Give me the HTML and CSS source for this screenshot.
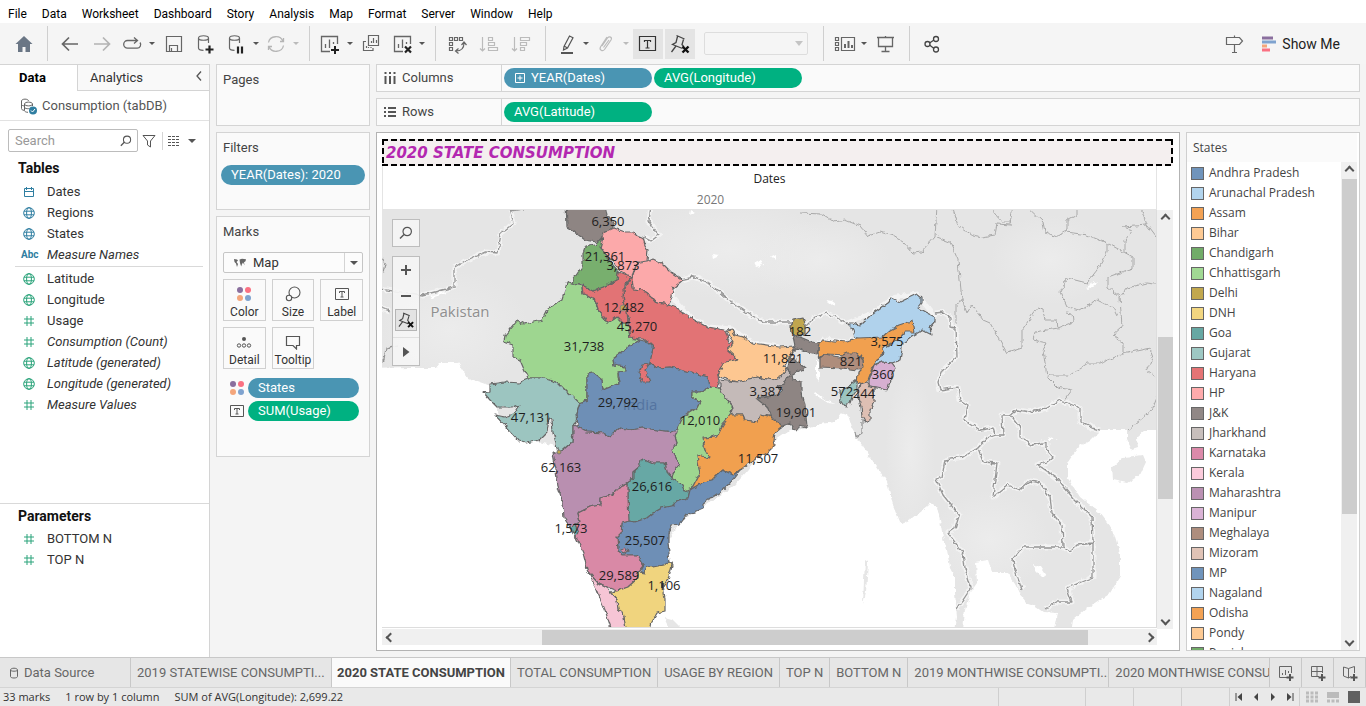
FILE: index.html
```html
<!DOCTYPE html>
<html lang="en">
<head>
<meta charset="utf-8">
<meta name="viewport" content="width=device-width, initial-scale=1">
<title>Consumption - 2020 STATE CONSUMPTION</title>
<link rel="stylesheet" href="styles.css">
</head>
<body>
<svg class="defs" aria-hidden="true">
  <defs>
    <symbol id="i-globe" viewBox="0 0 12 12"><g fill="none" stroke="currentColor"><circle cx="6" cy="6" r="5.3"/><ellipse cx="6" cy="6" rx="2.4" ry="5.3"/><path d="M1 4.2h10M1 7.8h10"/></g></symbol>
    <symbol id="i-hash" viewBox="0 0 12 12"><path d="M4 1v10M8 1v10M1 4h10M1 8h10" fill="none" stroke="currentColor"/></symbol>
    <symbol id="i-cal" viewBox="0 0 12 12"><path d="M1.5 2.5h9v8h-9zM1.5 5.5h9M3.5 1v3M8.500 1v3" fill="none" stroke="currentColor"/></symbol>
    <symbol id="i-dots" viewBox="0 0 16 16"><circle cx="4" cy="4" r="3" fill="#8a6f9e"/><circle cx="12" cy="4" r="3" fill="#fa7182"/><circle cx="4" cy="12" r="3" fill="#f4a67c"/><circle cx="12" cy="12" r="3" fill="#7fa3cf"/></symbol>
    <symbol id="i-text" viewBox="0 0 14 14"><path d="M.5 1.500h13v11H.5zM4.500 6V4.500h5V6M7 4.500v5.500M5.500 10h3" fill="none" stroke="#555"/></symbol>
    <symbol id="i-mag" viewBox="0 0 14 14"><circle cx="8.200" cy="5.500" r="4.200" fill="none" stroke="currentColor" stroke-width="1.200"/><path d="M5 8.500L1 12.500" stroke="currentColor" stroke-width="1.500"/></symbol>
    <symbol id="i-pin" viewBox="0 0 24 24"><path d="M8.500 3.500l8 3.500M9.500 4.500L8 10.500l-3.500 2 10 4M15.500 7.500l-1.500 5 2 2.500M8 14L3.500 20" fill="none" stroke="#444" stroke-width="1.300"/><path d="M14.500 14.500l6 6M20.500 14.500l-6 6" stroke="#111" stroke-width="2.400"/></symbol>
    <symbol id="i-db" viewBox="0 0 24 24"><path d="M4.500 6c0-3 10-3 10 0s-10 3-10 0v10c0 1.500 2 2.300 5 2.300M14.500 6v5" fill="none" stroke="#666" stroke-width="1.200"/></symbol>
    <symbol id="i-chart" viewBox="0 0 24 24"><path d="M13 19.500H4.500v-15h16V12M8.500 16v-4M12.500 16V7.500M16.500 12V10" fill="none" stroke="#666" stroke-width="1.300"/></symbol>
  </defs>
</svg>

<nav class="menubar">
  <button>File</button><button>Data</button><button>Worksheet</button><button>Dashboard</button><button>Story</button><button>Analysis</button><button>Map</button><button>Format</button><button>Server</button><button>Window</button><button>Help</button>
</nav>

<div class="toolbar">
  <div class="group group-home"><button class="tb" aria-label="Start page"><svg viewBox="0 0 24 24"><path d="M12 4l8.500 8H18v8h-4.500v-5h-3v5H6v-8H3.500z" fill="#6a7685"/></svg></button></div>
  <div class="group">
    <button class="tb" aria-label="Undo"><svg viewBox="0 0 24 24"><path d="M21 12H6M12 5.500L5.500 12l6.500 6.500" fill="none" stroke="#666" stroke-width="1.700"/></svg></button>
    <button class="tb" aria-label="Redo"><svg viewBox="0 0 24 24"><path d="M5 12h15M14 5.500l6.500 6.500-6.500 6.500" fill="none" stroke="#b3b3b3" stroke-width="1.700"/></svg></button>
    <button class="tb split" aria-label="Replay"><svg viewBox="0 0 24 24"><path d="M17 8.500H7.500a3.800 3.800 0 0 0 0 7.600h9.500a3.500 3.500 0 0 0 3-5.600M14 5.500l3.500 3-3.500 3" fill="none" stroke="#666" stroke-width="1.300"/></svg></button><button class="caret" aria-label="Replay options"></button>
    <button class="tb" aria-label="Save"><svg viewBox="0 0 24 24"><path d="M5.500 4.500h15v15h-15zM8.500 19v-5.500h8V19M10.500 19v-3" fill="none" stroke="#666" stroke-width="1.200"/></svg></button>
    <button class="tb" aria-label="New data source"><svg viewBox="0 0 24 24"><use href="#i-db" x="1"/><path d="M16.500 13.500v8M12.500 17.500h8" stroke="#222" stroke-width="2.200"/></svg></button>
    <button class="tb split" aria-label="Pause auto updates"><svg viewBox="0 0 24 24"><use href="#i-db" x="1"/><path d="M14 14.500v7M18 14.500v7" stroke="#222" stroke-width="2.200"/></svg></button><button class="caret" aria-label="Auto update options"></button>
    <button class="tb split" aria-label="Run update" disabled><svg viewBox="0 0 24 24"><path d="M4.500 10.500a7.500 7 0 0 1 14.500-1M19.500 13.500a7.500 7 0 0 1-14.500 1M16 9.500h3.500V6M8 14.500H4.500V18" fill="none" stroke="#b5b5b5" stroke-width="1.300"/></svg></button><button class="caret dim" aria-label="Run update options" disabled></button>
  </div>
  <div class="group">
    <button class="tb split" aria-label="New worksheet"><svg viewBox="0 0 24 24"><use href="#i-chart" x="-1"/><path d="M17 14v8M13 18h8" stroke="#222" stroke-width="2"/></svg></button><button class="caret" aria-label="New sheet options"></button>
    <button class="tb" aria-label="Duplicate"><svg viewBox="0 0 24 24"><path d="M9.500 3.500h10v10h-10zM12.500 11V9M14.500 11V6M17.500 11V8M14 16v2.500H4.500v-9H7M7.500 16v-2M9.500 16v-1M12 16v-1" fill="none" stroke="#666" stroke-width="1.200"/></svg></button>
    <button class="tb split" aria-label="Clear sheet"><svg viewBox="0 0 24 24"><use href="#i-chart"/><path d="M15 14.500l6 6M21 14.500l-6 6" stroke="#222" stroke-width="2.200"/></svg></button><button class="caret" aria-label="Clear options"></button>
  </div>
  <div class="group">
    <button class="tb" aria-label="Swap rows and columns"><svg viewBox="0 0 24 24"><path d="M4.500 5.500h3v3h-3zM9.500 5.500h3v3h-3zM14.500 5.500h3v3h-3zM4.500 10.500h3v3h-3zM4.500 15.500h3v3h-3zM19 11c0 5-3 8-8 8M16.500 13l2.500-3 2.500 3M13.500 16.500L10.500 19l3 2.500" fill="none" stroke="#666" stroke-width="1.200"/></svg></button>
    <button class="tb" aria-label="Sort ascending" disabled><svg viewBox="0 0 24 24"><path d="M5.500 5v14M3 16.500l2.500 2.500 2.500-2.500M11.500 5.500h4v3h-4zM11.500 10.500h6v3h-6zM11.500 15.500h9v3h-9z" fill="none" stroke="#bbb" stroke-width="1.200"/></svg></button>
    <button class="tb" aria-label="Sort descending" disabled><svg viewBox="0 0 24 24"><path d="M5.500 5v14M3 16.500l2.500 2.500 2.500-2.500M11.500 5.500h9v3h-9zM11.500 10.500h6v3h-6zM11.500 15.500h4v3h-4z" fill="none" stroke="#bbb" stroke-width="1.200"/></svg></button>
  </div>
  <div class="group">
    <button class="tb split" aria-label="Highlight"><svg viewBox="0 0 24 24"><path d="M10 14.500L15.500 4l3.500 1.800L13.500 16l-4 2zM10 14l3.500 2" fill="none" stroke="#555" stroke-width="1.200"/><path d="M7 21h12" stroke="#555" stroke-width="2"/></svg></button><button class="caret" aria-label="Highlight options"></button>
    <button class="tb split" aria-label="Group members" disabled><svg viewBox="0 0 24 24"><path d="M8 14l5.500-8c2-2.500 5-.5 3.500 2l-6.500 9.500c-2 2.500-5.500.5-4-2.500L13 5M9.500 15.500L15 8" fill="none" stroke="#bbb" stroke-width="1.200"/></svg></button><button class="caret dim" aria-label="Group options" disabled></button>
    <button class="tb on" aria-label="Show mark labels"><svg viewBox="0 0 24 24"><path d="M3.500 4.500h16v14h-16zM8.500 10V8.500h6V10M11.500 8.500v7.500M9.500 16h4" fill="none" stroke="#333" stroke-width="1.200"/></svg></button>
    <button class="tb on" aria-label="Fix axes"><svg viewBox="0 0 24 24"><use href="#i-pin"/></svg></button>
    <label class="fit"><select aria-label="Fit" disabled><option></option></select></label>
  </div>
  <div class="group">
    <button class="tb split" aria-label="Show cards"><svg viewBox="0 0 24 24"><path d="M3.500 5.500h3v3h-3zM3.500 10.500h3v3h-3zM3.500 15.500h3v3h-3zM9.500 5.500h13v13h-13z" fill="none" stroke="#666" stroke-width="1.200"/><path d="M13 16v-4M16.500 16V9M20 16v-3" stroke="#666" stroke-width="2"/></svg></button><button class="caret" aria-label="Card options"></button>
    <button class="tb" aria-label="Presentation mode"><svg viewBox="0 0 24 24"><path d="M4 5.500h17M5.500 5.500v9h14v-9M12.500 14.500v5M8.500 19.500h8M12.500 4v1.500" fill="none" stroke="#666" stroke-width="1.300"/></svg></button>
  </div>
  <div class="group group-last"><button class="tb" aria-label="Share"><svg viewBox="0 0 24 24"><g fill="none" stroke="#444" stroke-width="1.300"><circle cx="7.500" cy="12" r="2.500"/><circle cx="16" cy="7" r="2.500"/><circle cx="16" cy="17.500" r="2.500"/><path d="M9.500 11l4.500-3M9.500 13l4.500 3.500"/></g></svg></button></div>
  <div class="toolbar-end">
    <button class="tb" aria-label="Guide me"><svg viewBox="0 0 24 24"><path d="M4.500 5.500h13l3 3.500-3 3.500h-13zM12.500 3.500v2M12.500 12.500v8M10 20.500h5" fill="none" stroke="#666" stroke-width="1.200"/></svg></button>
    <button class="showme"><svg viewBox="0 0 16 16"><path d="M1 .5h11v3H1z" fill="#8a6f9e"/><path d="M1 4.500h14v3H1z" fill="#7fa3cf"/><path d="M1 8.500h5v3H1z" fill="#f4a67c"/><path d="M1 12.500h8v3H1z" fill="#fa7182"/></svg>Show Me</button>
  </div>
</div>

<main class="workspace">
  <aside class="datapane">
    <div class="pane-tabs">
      <button class="pane-tab active">Data</button>
      <button class="pane-tab">Analytics</button>
      <button class="collapse" aria-label="Collapse"><svg viewBox="0 0 8 12"><path d="M6 1.500L2 6l4 4.500" fill="none" stroke="#555" stroke-width="1.300"/></svg></button>
    </div>
    <div class="source"><svg viewBox="0 0 18 18"><path d="M1.500 4c0-2.500 7-2.500 7 0M1.500 4v7.500c0 1 1 1.800 2.500 1.800M4.500 7c0-2.500 8-2.500 8 0s-8 2.500-8 0v6.500c0 1 1.500 1.800 3.500 1.800M12.500 7v2M1.500 7.500c.5 1 1.500 1.300 2.500 1.300M5 11c1.500.8 3 .8 4.500.5" fill="none" stroke="#666"/><circle cx="13" cy="13.500" r="4" fill="#2f7ea1"/><path d="M11 13.500l1.500 1.500 2.500-3" fill="none" stroke="#fff"/></svg>Consumption (tabDB)</div>
    <div class="searchrow">
      <label class="search"><input type="text" placeholder="Search" aria-label="Search"><svg viewBox="0 0 14 14"><use href="#i-mag"/></svg></label>
      <button aria-label="Filter fields"><svg viewBox="0 0 14 14"><path d="M1 1.500h12L8.500 7v6l-3-2V7z" fill="none" stroke="#555"/></svg></button>
      <button class="view" aria-label="View options"><svg viewBox="0 0 14 12"><path d="M1 1.500h12M1 4.500h12M1 7.500h12M1 10.500h12" stroke="#555" stroke-width="1.200" stroke-dasharray="3 1"/></svg><span class="arrow"></span></button>
    </div>
    <h2>Tables</h2>
    <ul class="fields dims">
      <li><svg><use href="#i-cal"/></svg>Dates</li>
      <li><svg><use href="#i-globe"/></svg>Regions</li>
      <li><svg><use href="#i-globe"/></svg>States</li>
      <li class="gen"><span class="abc">Abc</span>Measure Names</li>
    </ul>
    <ul class="fields measures">
      <li><svg><use href="#i-globe"/></svg>Latitude</li>
      <li><svg><use href="#i-globe"/></svg>Longitude</li>
      <li><svg><use href="#i-hash"/></svg>Usage</li>
      <li class="gen"><svg><use href="#i-hash"/></svg>Consumption (Count)</li>
      <li class="gen"><svg><use href="#i-globe"/></svg>Latitude (generated)</li>
      <li class="gen"><svg><use href="#i-globe"/></svg>Longitude (generated)</li>
      <li class="gen"><svg><use href="#i-hash"/></svg>Measure Values</li>
    </ul>
    <section class="params">
      <h2>Parameters</h2>
      <ul class="fields measures plain">
        <li><svg><use href="#i-hash"/></svg>BOTTOM N</li>
        <li><svg><use href="#i-hash"/></svg>TOP N</li>
      </ul>
    </section>
  </aside>

  <div class="cards">
    <section class="card card-pages"><h3>Pages</h3></section>
    <section class="card card-filters"><h3>Filters</h3><button class="pill dim">YEAR(Dates): 2020</button></section>
    <section class="card card-marks">
      <h3>Marks</h3>
      <label class="marktype"><svg viewBox="0 0 14 10"><path d="M1 1l3 .5 1 1L3.500 4l1.500 2-1 3-1-3.500L1.500 4zM6.500 1.500L9 .8l4 .4-.5 2-1.500 1 .5 3L10 4.500 9 6l-.8 2.500L7 5z" fill="#666"/></svg><select aria-label="Mark type"><option>Map</option></select><span class="drop"><span class="arrow"></span></span></label>
      <div class="markgrid">
        <button><svg viewBox="0 0 16 16"><use href="#i-dots"/></svg>Color</button>
        <button><svg viewBox="0 0 16 16"><g fill="none" stroke="#555" stroke-width="1.100"><circle cx="9.500" cy="6.500" r="5.500"/><circle cx="4" cy="12" r="2.700" fill="#fafafa"/></g></svg>Size</button>
        <button><svg viewBox="0 0 16 16"><use href="#i-text" x="1" y="1" width="14" height="14"/></svg>Label</button>
        <button><svg viewBox="0 0 16 16"><circle cx="8" cy="5" r="2" fill="#555"/><g fill="none" stroke="#555"><circle cx="3" cy="11.500" r="1.700"/><circle cx="8" cy="11.500" r="1.700"/><circle cx="13" cy="11.500" r="1.700"/></g></svg>Detail</button>
        <button><svg viewBox="0 0 16 16"><path d="M1.500 2.500h13v9h-3V15L8 11.500H1.500z" fill="none" stroke="#555" stroke-width="1.200"/></svg>Tooltip</button>
      </div>
      <div class="encodings">
        <div><svg viewBox="0 0 16 16"><use href="#i-dots"/></svg><button class="pill dim">States</button></div>
        <div><svg viewBox="0 0 16 16"><use href="#i-text" x="1" y="1" width="14" height="14"/></svg><button class="pill mea">SUM(Usage)</button></div>
      </div>
    </section>
  </div>

  <div class="canvas">
    <div class="shelf">
      <div class="shelf-name"><svg viewBox="0 0 12 12"><path d="M1.500 4v8M6 4v8M10.500 4v8M1.500 0v2M6 0v2M10.500 0v2" stroke="#555" stroke-width="2"/></svg>Columns</div>
      <button class="pill dim"><svg viewBox="0 0 10 10"><path d="M.5.5h9v9h-9zM5 2.500v5M2.500 5h5" fill="none" stroke="#fff"/></svg>YEAR(Dates)</button>
      <button class="pill mea">AVG(Longitude)</button>
    </div>
    <div class="shelf">
      <div class="shelf-name"><svg viewBox="0 0 12 12"><path d="M4 2h8M4 6h8M4 10h8M0 2h2M0 6h2M0 10h2" stroke="#555" stroke-width="2"/></svg>Rows</div>
      <button class="pill mea">AVG(Latitude)</button>
    </div>
    <div class="sheet-row">
      <section class="sheet">
        <h1 class="sheet-title">2020 STATE CONSUMPTION</h1>
        <div class="viz">
          <div class="viz-head"><div class="field-label">Dates</div><div class="col-header">2020</div></div>
          <div class="map">
            <svg class="mapsvg" viewBox="382 210 774 417" preserveAspectRatio="xMidYMid slice" role="img" aria-label="Map of India by state">
              <defs>
                <filter id="rough" x="-5%" y="-5%" width="110%" height="110%" color-interpolation-filters="sRGB"><feTurbulence type="fractalNoise" baseFrequency="0.18" numOctaves="2" seed="4"/><feDisplacementMap in="SourceGraphic" scale="5" xChannelSelector="R" yChannelSelector="G"/></filter>
                <radialGradient id="relief"><stop offset="0" stop-color="#ececec"/><stop offset="1" stop-color="#ececec" stop-opacity="0"/></radialGradient>
              </defs>
              <rect x="372" y="200" width="800" height="440" fill="#e5e5e5"/>
              <g fill="url(#relief)"><ellipse cx="450" cy="330" rx="80" ry="60"/><ellipse cx="1050" cy="260" rx="60" ry="45"/><ellipse cx="730" cy="250" rx="100" ry="50"/><ellipse cx="910" cy="450" rx="25" ry="80"/><ellipse cx="820" cy="260" rx="70" ry="40"/><ellipse cx="990" cy="540" rx="60" ry="50"/></g>
              <g fill="#fff" filter="url(#rough)">
                <path d="M372 369L410 368 436 368 440 363 458 363 468 378 491 386 500 420 530 440 556 446 570 525 600 590 614 640H372z"/>
                <path d="M645 640L652 622 660 600 662 570 668 540 680 522 703 507 735 485 760 456 775 440 790 430 807 429 820 424 835 422 842 413 848 415 852 428 863 447 877 467 887 482 893 505 901 524 913 518 927 507 930 502 937 507 940 520 943 537 947 550 950 567 955 577 955 593 957 617 954 640z"/>
                <path d="M962 640L965 610 970 593 977 583 976 562 988 560 992 572 1007 572 1015 583 1022 597 1027 603 1033 605 1043 612 1057 613 1052 640z"/>
                <path d="M1170 430L1145 430 1137 437 1138 448 1132 450 1127 440 1127 430 1100 430 1090 440 1078 447 1067 463 1067 477 1080 497 1100 513 1113 530 1120 553 1120 577 1110 593 1087 608 1073 620 1070 640H1170z"/>
                <path d="M430 292l18-4-4 6-13 4zM826 300l6 1 4 3-7 1zM754 263l7-3 2 5-7 2zM771 257l4-2v6zM712 254l7 1-6 3zM690 210l5 3-6 2zM1086 288l9-6 4-1-11 8zM1034 564l6 3 6 9-4 1-6-6zM1048 437l9 3-7 0zM815 392l12 9 9 3-8-1-14-9zM816 360l3 1v20l-3-4z"/>
              </g>
              <g fill="#e6e6e6" filter="url(#rough)"><path d="M1112 467L1123 457 1143 455 1146 462 1140 475 1127 483 1113 480z"/><path d="M664 618l8 2 8 8-2 6-10-8zM865 560l3 2-2 30-3 12 1-24z"/></g>
              <g filter="url(#rough)" fill="none" stroke-linejoin="round">
                <g stroke="#f3f3f3" stroke-width="5"><path d="M509 205L514 223 501 233 498 253 486 252 464 262 454 268 454 287 423 295 372 288M372 305L390 311M651 205L649 222 659 235 651 241 643 237M681 280L694 277 709 283 726 298 746 312 763 322 793 322M805 327L815 317 827 313 845 322M936 313L943 312 950 317 950 327 956 328 957 357 943 370 938 382 940 390 958 387 960 400 968 405 965 420 980 430 993 428 995 435 1003 435 1002 415 1010 415 1017 410 1030 412 1047 408 1060 400 1080 408 1080 422 1093 428 1100 430M1010 415L1020 428 1020 437 1032 445 1047 442 1047 450 1053 457 1047 462 1038 465 1057 478 1073 498 1092 517 1093 543 1093 577 1067 588 1072 602 1057 602 1046 609M995 435L987 438 978 448 983 462 997 463 993 497 1008 485 1020 490 1030 481 1040 483 1050 497 1052 513 1062 525 1063 547 1070 552 1077 545 1093 543M1063 547L1023 547 1013 560 1015 570 1022 590M978 448L963 457 945 460 942 477 936 479 943 495 959 515 955 528 948 533 963 553 965 568 971 588 957 609M673 288L672 297 690 317 708 327 732 329 753 343 780 347M817 345L823 340 847 342 858 338M847 323L873 313 892 298 917 294 935 317M869 387L867 420"/></g>
                <g stroke="#959595" stroke-width="1.300"><path d="M509 205L514 223 501 233 498 253 486 252 464 262 454 268 454 287 423 295 372 288M510 211L529 208M372 305L390 311M382 258L386 264 384 273M372 372L384 360 386 348 398 345M651 205L649 222 659 235 651 241 643 237M681 280L694 277 709 283 726 298 746 312 763 322 793 322M805 327L815 317 827 313 845 322M936 313L943 312 950 317 950 327 956 328 957 357 943 370 938 382 940 390 958 387 960 400 968 405 965 420 980 430 993 428 995 435 1003 435 1002 415 1010 415 1017 410 1030 412 1047 408 1060 400 1080 408 1080 422 1093 428 1100 430M1010 415L1020 428 1020 437 1032 445 1047 442 1047 450 1053 457 1047 462 1038 465 1057 478 1073 498 1092 517 1093 543 1093 577 1067 588 1072 602 1057 602 1046 609M995 435L987 438 978 448 983 462 997 463 993 497 1008 485 1020 490 1030 481 1040 483 1050 497 1052 513 1062 525 1063 547 1070 552 1077 545 1093 543M1063 547L1023 547 1013 560 1015 570 1022 590M978 448L963 457 945 460 942 477 936 479 943 495 959 515 955 528 948 533 963 553 965 568 971 588 957 609M862 420L862 434 856 438 855 432"/></g>
                <path stroke="#a9a9a9" d="M937 205L935 237 922 252 913 253 903 242 893 236 880 232 868 236 860 226 845 220 835 222 822 214 800 213M937 237L950 242 958 260 962 300 967 313 972 305 983 320 990 323 1007 353 1022 348 1022 330 1037 308 1043 310 1045 320 1057 320 1058 328M962 300L956 304 956 325M952 205L958 225 972 235 983 237 995 235 997 224 1010 225 1013 205M990 208L1002 222 1010 222M1025 205L1043 222 1045 232 1057 237 1067 230 1067 220 1077 215 1077 205M1067 232L1087 235 1107 243 1107 253 1097 270 1087 283 1067 278 1060 292 1067 307 1080 310 1097 300 1113 308 1117 316M1107 243L1133 257 1133 268 1108 277 1108 287 1120 297 1122 327 1113 335 1123 343 1123 354 1100 363 1088 363 1070 375 1050 375 1047 377 1043 350 1047 343 1033 340 1035 332 1058 328 1073 322 1072 313 1067 312M1125 253L1125 240 1133 230 1123 227 1147 225 1156 237M1140 205L1147 225M1120 297L1127 288 1147 283 1170 286M1123 354L1150 348 1153 357 1147 370 1160 380M1047 377L1057 387 1072 390 1063 402M1160 390L1152 410 1128 430"/>
              </g>
              <g filter="url(#rough)" stroke="#666" stroke-width="1.200" stroke-linejoin="round">
                <path fill="#8e8583" d="M566 200L567 227 572 230 585 240 598 242 603 236 603 233 614 228 613 223 607 215 604 200z"/>
                <path fill="#fca9aa" d="M603 233L614 228 625 232 633 232 636 235 643 238 645 245 648 250 647 261 640 262 635 267 632 277 627 276 622 272 619 270 612 260 603 250 600 245z"/>
                <path fill="#fca9aa" d="M647 262L653 259 663 264 672 273 683 280 673 288 672 297 668 305 657 303 652 297 642 290 633 289 632 278 636 265 640 263z"/>
                <path fill="#9ed690" d="M572 284L582 286 583 294 587 295 595 300 598 310 604 317 607 323 617 317 623 323 628 323 630 338 640 340 627 348 613 358 614 365 625 367 625 371 618 372 618 377 620 383 603 390 602 380 593 373 587 374 587 400 578 403 567 392 558 383 543 378 528 378 523 367 520 360 513 357 513 345 504 342 505 335 517 320 525 324 542 320 548 308 562 300 567 283z"/>
                <path fill="#e27375" d="M618 272L627 276 632 277 625 285 623 297 624 303 627 310 628 323 623 323 617 317 613 320 607 323 604 317 598 310 595 300 587 295 583 294 582 286 585 287 593 291 603 287 617 280z"/>
                <path fill="#e27375" d="M632 277L633 289 642 290 652 297 657 303 668 305 677 308 690 317 708 327 725 330 729 342 733 343 728 350 738 359 723 363 718 375 719 383 715 390 710 388 708 377 683 370 670 367 657 368 650 363 653 347 643 339 630 338 628 323 629 317 624 303 623 290z"/>
                <path fill="#78af6e" d="M598 242L603 238 600 247 607 255 612 265 618 272 617 280 603 287 593 291 585 287 583 285 572 284 573 280 583 265 583 253 585 247 595 245z"/>
                <path fill="#9cc5c0" d="M528 378L543 378 558 383 567 392 580 403 577 413 578 420 573 425 573 433 572 442 563 450 558 453 556 443 553 432 552 420 549 418 547 433 540 440 526 443 519 441 507 428 495 415 505 417 515 413 520 405 512 408 498 408 490 400 484 393 490 391 490 384 505 382 520 383 523 380z"/>
                <path fill="#6e8fb6" d="M613 358L627 348 640 340 648 342 653 347 650 363 657 368 670 367 683 370 708 377 710 387 700 392 692 392 692 397 700 402 697 408 687 413 682 420 678 427 673 432 657 430 643 428 630 430 620 428 613 433 610 437 603 433 587 432 578 427 577 413 580 403 587 400 587 374 593 373 602 380 603 390 620 383 618 372 625 371 625 367 614 365z"/>
                <path fill="#e27375" d="M642 364L650 363 645 370 650 382 642 382 639 373z"/>
                <path fill="#9ed690" d="M692 392L700 392 710 387 720 388 725 398 733 407 730 415 722 425 718 435 705 438 703 445 705 450 710 458 697 455 698 463 700 473 692 488 685 491 680 483 672 478 675 468 680 465 677 460 672 450 677 443 675 437 677 430 683 417 697 408 700 402 692 397z"/>
                <path fill="#fdc791" d="M727 330L732 329 735 335 743 337 753 343 767 345 780 347 795 346 790 355 783 367 787 368 780 377 772 380 757 377 745 380 737 382 720 377 718 375 723 363 738 359 728 350 733 343z"/>
                <path fill="#c4bab8" d="M720 380L737 382 757 377 772 380 780 377 787 368 790 373 785 383 778 387 782 390 778 395 763 397 758 398 767 407 772 417 760 414 758 422 745 420 743 415 730 415 733 407 725 398 720 388z"/>
                <path fill="#8e8583" d="M793 336L800 337 812 342 819 343 817 354 808 352 797 348 792 352 790 358 795 360 800 363 806 368 797 372 792 375 793 380 802 382 802 393 805 405 807 428 800 426 797 430 793 429 790 423 782 427 772 420 767 407 757 399 778 395 782 390 778 387 785 383 790 373 787 367 790 355 795 346z"/>
                <path fill="#c0a64f" d="M793 320L803 318 805 323 805 334 793 336 791 327z"/>
                <path fill="#b0d2ec" d="M847 323L853 323 860 325 873 313 887 303 892 298 900 302 917 294 922 298 922 303 918 308 925 312 935 317 935 322 930 328 932 335 922 330 913 335 903 343 900 360 892 363 882 362 874 365 877 360 882 357 883 348 858 338 855 337 852 328z"/>
                <path fill="#f1a04f" d="M819 343L823 340 847 342 858 338 882 337 890 330 900 325 912 321 914 332 905 332 900 338 892 343 883 348 882 357 877 360 873 367 868 380 863 384 857 382 858 373 863 368 863 360 858 353 850 355 825 354 820 358 818 352z"/>
                <path fill="#ae8d7c" d="M820 358L825 354 838 357 848 353 857 353 863 360 864 368 857 370 843 368 820 367z"/>
                <path fill="#d6afd1" d="M874 366L882 362 892 363 895 367 892 377 887 390 877 388 869 387 869 380z"/>
                <path fill="#debfb3" d="M860 384L867 382 870 387 874 388 874 402 870 410 870 420 865 422 862 417 861 407 858 393z"/>
                <path fill="#9cc5c0" d="M857 380L857 390 852 397 850 403 845 406 841 400 840 390 848 387z"/>
                <path fill="#f1a04f" d="M730 415L743 415 745 420 758 422 760 414 772 417 782 427 775 433 774 440 775 445 768 452 757 458 740 470 733 475 723 470 717 475 712 480 703 482 690 490 692 488 700 473 698 463 697 455 710 458 705 450 703 438 717 437 722 427z"/>
                <path fill="#b98fb0" d="M578 427L587 432 603 433 610 437 613 433 620 428 630 430 643 428 657 430 673 432 677 432 675 437 677 443 672 450 677 460 680 465 675 468 672 478 667 472 665 463 653 463 642 458 639 467 633 472 633 478 628 482 620 487 612 495 600 498 600 505 590 507 578 513 580 522 575 525 570 527 564 518 563 503 558 487 556 470 553 453 558 453 563 450 572 442 573 433 573 425z"/>
                <path fill="#67a8a5" d="M570 527L575 525 578 532 578 537 575 537 572 532z"/>
                <path fill="#67a8a5" d="M628 482L633 478 633 472 639 467 642 458 653 463 665 463 667 472 672 478 680 483 685 491 690 491 688 498 678 501 672 506 662 508 653 513 647 518 635 522 628 521 629 508 628 497z"/>
                <path fill="#6e8fb6" d="M622 523L629 521 635 522 647 518 653 513 662 508 672 506 678 501 688 498 690 490 703 482 712 480 717 475 723 470 733 475 740 470 730 483 720 492 703 503 703 508 687 515 680 524 672 525 668 533 668 543 670 562 663 565 653 567 647 567 644 573 640 573 644 565 637 555 622 555 618 550 617 537 621 533z"/>
                <path fill="#d989a6" d="M628 482L628 497 629 521 622 523 621 533 617 537 618 550 622 555 637 555 644 565 638 572 638 578 628 587 617 591 607 587 597 582 588 572 583 553 576 537 578 532 575 525 580 522 578 513 590 507 600 505 600 498 612 495 620 487z"/>
                <path fill="#f0d47e" d="M670 561L672 565 668 580 663 585 665 600 665 611 657 613 652 622 648 640 628 640 623 612 618 610 617 600 610 592 617 591 628 587 638 578 638 572 644 573 647 567 653 567 663 565z"/>
                <path fill="#f6c5d5" d="M588 572L597 582 607 587 610 592 617 600 618 610 623 612 628 640 615 640 605 610 597 590z"/>
                <path fill="#d989a6" d="M621 550l4-2 3 3-4 2z"/>
              </g>
              <circle cx="623" cy="308" r="3" fill="#c0a64f" stroke="#8e8583"/>
              <circle cx="559" cy="452" r="2" fill="#c0a64f" stroke="#777"/>
              <path d="M661 583h3v5h-3z" fill="#555"/>
              <g class="place"><text x="460" y="317">Pakistan</text><text class="in" x="640" y="410">India</text></g>
              <g class="labels">
                <text x="608" y="226">6,350</text><text x="605" y="261">21,361</text><text x="623" y="270">3,873</text><text x="624" y="312">12,482</text><text x="637" y="331">45,270</text><text x="584" y="351">31,738</text><text x="618" y="407">29,792</text><text x="531" y="422">47,131</text><text x="700" y="425">12,010</text><text x="783" y="363">11,821</text><text x="800" y="336">182</text><text x="766" y="396">3,387</text><text x="796" y="417">19,901</text><text x="887" y="346">3,575</text><text x="851" y="366">821</text><text x="883" y="379">360</text><text x="842" y="396">572</text><text x="864" y="398">244</text><text x="758" y="463">11,507</text><text x="561" y="472">62,163</text><text x="652" y="491">26,616</text><text x="571" y="533">1,573</text><text x="645" y="545">25,507</text><text x="619" y="580">29,589</text><text x="664" y="590">1,106</text>
              </g>
            </svg>
            <div class="maptools">
              <div class="toolbox"><button aria-label="Search map"><svg viewBox="0 0 14 14"><use href="#i-mag"/></svg></button></div>
              <div class="toolbox">
                <button aria-label="Zoom in"><svg viewBox="0 0 14 14"><path d="M7 2v10M2 7h10" stroke="#555" stroke-width="2"/></svg></button>
                <button aria-label="Zoom out"><svg viewBox="0 0 14 14"><path d="M2 7h10" stroke="#555" stroke-width="2"/></svg></button>
                <button class="pinned" aria-label="Reset map"><svg viewBox="0 0 24 24"><use href="#i-pin"/></svg></button>
                <button class="more" aria-label="More tools"><svg viewBox="0 0 14 14"><path d="M4 2l6.500 5L4 12z" fill="#555"/></svg></button>
              </div>
            </div>
          </div>
          <div class="vscroll"><span class="chev up"></span><div class="thumb"></div><span class="chev down"></span></div>
          <div class="hscroll"><span class="chev left"></span><div class="thumb"></div><span class="chev right"></span></div>
        </div>
      </section>
      <section class="legend">
        <h3>States</h3>
        <div class="legend-body">
          <ul>
            <li><i class="c-blue"></i>Andhra Pradesh</li><li><i class="c-sky"></i>Arunachal Pradesh</li><li><i class="c-orange"></i>Assam</li><li><i class="c-peach"></i>Bihar</li><li><i class="c-green"></i>Chandigarh</li><li><i class="c-lime"></i>Chhattisgarh</li><li><i class="c-olive"></i>Delhi</li><li><i class="c-yellow"></i>DNH</li><li><i class="c-teal"></i>Goa</li><li><i class="c-aqua"></i>Gujarat</li><li><i class="c-red"></i>Haryana</li><li><i class="c-salmon"></i>HP</li><li><i class="c-gray"></i>J&amp;K</li><li><i class="c-silver"></i>Jharkhand</li><li><i class="c-rose"></i>Karnataka</li><li><i class="c-pink"></i>Kerala</li><li><i class="c-purple"></i>Maharashtra</li><li><i class="c-lilac"></i>Manipur</li><li><i class="c-brown"></i>Meghalaya</li><li><i class="c-tan"></i>Mizoram</li><li><i class="c-blue"></i>MP</li><li><i class="c-sky"></i>Nagaland</li><li><i class="c-orange"></i>Odisha</li><li><i class="c-peach"></i>Pondy</li><li><i class="c-green"></i>Punjab</li>
          </ul>
          <div class="vscroll"><span class="chev up"></span><div class="thumb"></div><span class="chev down"></span></div>
        </div>
      </section>
    </div>
  </div>
</main>

<footer>
  <div class="sheettabs">
    <button class="st source-tab"><svg viewBox="0 0 10 12"><path d="M1.500 3c0-2.400 7-2.400 7 0v6.500c0 2-7 2-7 0zM1.500 3c0 1.600 7 1.600 7 0" fill="none" stroke="#666"/></svg>Data Source</button>
    <button class="st long">2019 STATEWISE CONSUMPTI...</button>
    <button class="st active">2020 STATE CONSUMPTION</button>
    <button class="st">TOTAL CONSUMPTION</button>
    <button class="st">USAGE BY REGION</button>
    <button class="st">TOP N</button>
    <button class="st">BOTTOM N</button>
    <button class="st long">2019 MONTHWISE CONSUMPTI...</button>
    <button class="st last">2020 MONTHWISE CONSU</button>
    <button class="st add" aria-label="New worksheet"><svg viewBox="0 0 16 16"><path d="M9 12.500H1.500v-11h12V8M4.500 10V8M7.500 10V5M10.500 8V6" fill="none" stroke="#666"/><path d="M12 9v7M8.500 12.500h7" stroke="#555" stroke-width="2"/></svg></button>
    <button class="st add" aria-label="New dashboard"><svg viewBox="0 0 16 16"><path d="M9 11.500H1.500v-10h11V8M7 1.500v10M1.500 6.500h11" fill="none" stroke="#666"/><path d="M12 9v7M8.500 12.500h7" stroke="#555" stroke-width="2"/></svg></button>
    <button class="st add" aria-label="New story"><svg viewBox="0 0 16 16"><path d="M9 11.500L6.500 13 1.500 11V2l5 1.500 6-2V8M6.500 3.500V13" fill="none" stroke="#666"/><path d="M12 9v7M8.500 12.500h7" stroke="#555" stroke-width="2"/></svg></button>
  </div>
  <div class="status">
    <span>33 marks</span><span>1 row by 1 column</span><span>SUM of AVG(Longitude): 2,699.22</span>
    <div class="cells"><i></i><i></i><i></i><i></i></div>
    <div class="nav">
      <button aria-label="First sheet"><svg viewBox="0 0 8 8"><path d="M1 0v8" stroke="#444"/><path d="M7 0v8L2.500 4z" fill="#444"/></svg></button>
      <button aria-label="Previous sheet"><svg viewBox="0 0 8 8"><path d="M6 0v8L2 4z" fill="#444"/></svg></button>
      <button aria-label="Next sheet"><svg viewBox="0 0 8 8"><path d="M2 0v8l4-4z" fill="#444"/></svg></button>
      <button aria-label="Last sheet"><svg viewBox="0 0 8 8"><path d="M7 0v8" stroke="#444"/><path d="M1 0v8l4.500-4z" fill="#444"/></svg></button>
    </div>
    <div class="views">
      <button aria-label="Show sheet sorter"><svg viewBox="0 0 12 12"><path d="M0 2h12M0 6h12M0 10h12" stroke="#bbb" stroke-width="3" stroke-dasharray="3 1.500"/></svg></button>
      <button aria-label="Show filmstrip"><svg viewBox="0 0 12 12"><path d="M0 1h12v6H0z" fill="#bbb"/><path d="M0 10h12" stroke="#bbb" stroke-width="3" stroke-dasharray="3 1.500"/></svg></button>
      <button aria-label="Show tabs"><svg viewBox="0 0 12 12"><path d="M0 0h12v12H0z" fill="#606060"/></svg></button>
    </div>
  </div>
</footer>
</body>
</html>
```
FILE: styles.css
```css
* { box-sizing: border-box; }
html, body { height: 100%; }
body {
  margin: 0;
  display: flex;
  flex-direction: column;
  min-height: 100vh;
  overflow: hidden;
  background: #f4f4f4;
  color: #333;
  font: 13px/20px Roboto, "Open Sans", sans-serif;
}
button, input, select { font: inherit; color: inherit; margin: 0; }
button { border: 0; padding: 0; background: none; }
h1, h2, h3, ul { margin: 0; padding: 0; font-weight: normal; }
ul { list-style: none; }
.defs { position: absolute; width: 0; height: 0; }

/* Menu bar */
.menubar { display: flex; gap: 15px; height: 23px; flex: none; padding: 4px 8px 0; background: #fff; color: #000; font-size: 12px; }

/* Toolbar */
.toolbar { display: flex; align-items: center; flex: none; height: 41px; background: #f5f5f5; }
.group { display: flex; align-items: center; height: 35px; padding: 0 8px 0 5px; border-right: 1px solid #cfcfcf; }
.group-home { padding: 0 7px 0 8px; }
.group-last { border: 0; padding-left: 6px; }
.tb { display: flex; align-items: center; justify-content: center; width: 32px; height: 30px; }
.tb svg { width: 24px; height: 24px; }
.tb.split { width: 30px; }
.tb.on { width: 30px; background: #e4e4e4; margin-left: 2px; }
.caret { width: 10px; height: 30px; display: flex; align-items: center; justify-content: center; }
.caret::before, .arrow { content: ""; border: 3px solid transparent; border-top-color: #555; border-bottom: 0; }
.caret.dim::before { border-top-color: #bbb; }
.fit { position: relative; margin: 0 7px 0 9px; display: flex; }
.fit select { appearance: none; width: 104px; height: 23px; border: 1px solid #d4d4d4; border-radius: 2px; background: #f5f5f5; }
.fit::after { content: ""; position: absolute; right: 5px; top: 9px; border: 4px solid transparent; border-top: 5px solid #c4c4c4; border-bottom: 0; }
.toolbar-end { margin-left: auto; display: flex; align-items: center; gap: 11px; padding-right: 26px; }
.showme { display: flex; align-items: center; gap: 5px; color: #222; font-size: 14px; }
.showme svg { width: 16px; height: 16px; }

/* Workspace */
.workspace { flex: 1; min-height: 0; display: flex; gap: 6px; padding-right: 6px; }

/* Data pane */
.datapane { flex: none; width: 210px; background: #fff; border-right: 1px solid #d4d4d4; border-top: 1px solid #d4d4d4; display: flex; flex-direction: column; }
.pane-tabs { display: flex; height: 26px; }
.pane-tab { padding: 0 12px; background: #f9f9f9; border-left: 1px solid #d4d4d4; border-bottom: 1px solid #d4d4d4; }
.pane-tab.active { flex: none; width: 77px; padding: 0 30px 0 18px; border: 0; background: #fff; color: #000; font-weight: bold; }
.collapse { flex: 1; background: #f9f9f9; border-bottom: 1px solid #d4d4d4; text-align: right; padding-right: 6px; }
.collapse svg { width: 8px; height: 12px; display: inline-block; }
.source { display: flex; align-items: center; gap: 4px; height: 30px; padding-left: 20px; border-bottom: 1px solid #e2e2e2; color: #555; }
.source svg { width: 18px; height: 18px; }
.searchrow { display: flex; align-items: center; gap: 4px; margin: 8px 8px 6px; height: 23px; }
.search { flex: none; display: flex; align-items: center; width: 130px; height: 23px; border: 1px solid #bcbcbc; border-radius: 2px; padding: 0 5px 0 6px; color: #555; }
.search input { flex: 1; min-width: 0; border: 0; padding: 0; outline: 0; background: none; }
.search input::placeholder { color: #999; }
.search svg { width: 12px; height: 12px; }
.searchrow button { display: flex; align-items: center; height: 18px; }
.searchrow button svg { width: 14px; height: 14px; }
.searchrow .view { border-left: 1px solid #d4d4d4; padding-left: 4px; gap: 7px; margin-left: 2px; }
.arrow { display: block; border-width: 4px; border-bottom: 0; }
.datapane h2 { font-size: 14px; font-weight: bold; color: #111; line-height: 20px; padding-left: 18px; }
.fields li { display: flex; align-items: center; gap: 12px; height: 21px; padding-left: 23px; color: #333; }
.fields svg { width: 12px; height: 12px; flex: none; }
.dims { padding: 3px 0 0; }
.dims svg, .abc { color: #2f7ea1; }
.measures { margin: 0 6px 0 15px; padding-top: 1px; border-top: 1px solid #d9d9d9; }
.measures li { padding-left: 8px; }
.measures svg { color: #2aa37a; }
.gen { font-style: italic; }
.dims .gen { height: 22px; }
.abc { width: 16px; margin: 0 -2px; font: bold 10px/20px Roboto, sans-serif; }
.params { margin-top: auto; height: 154px; border-top: 1px solid #d9d9d9; padding-top: 2px; }
.plain { border: 0; padding-top: 2px; }

/* Cards */
.cards { flex: none; width: 154px; display: flex; flex-direction: column; gap: 6px; }
.card { background: #fafafa; border: 1px solid #d4d4d4; padding: 5px 4px; }
.card h3 { font-size: 13px; line-height: 20px; padding-left: 2px; color: #444; }
.card-pages { height: 62px; }
.card-filters { height: 78px; }
.card-marks { height: 241px; padding: 5px 6px; }
.card-marks h3 { padding-left: 0; }
.pill { display: flex; align-items: center; gap: 6px; height: 20px; width: 148px; padding: 0 10px; border-radius: 10px; color: #fff; }
.pill.dim { background: #4a95b3; }
.pill.mea { background: #00b181; }
.pill svg { width: 10px; height: 10px; margin-left: 1px; }
.card-filters .pill { width: 100%; margin-top: 7px; }
.marktype { display: flex; align-items: center; height: 21px; margin-top: 10px; border: 1px solid #c6c6c6; border-radius: 2px; background: #fcfcfc; }
.marktype svg { width: 14px; height: 10px; margin-left: 9px; flex: none; }
.marktype select { appearance: none; flex: 1; min-width: 0; border: 0; background: none; padding: 0 0 0 6px; }
.drop { display: flex; align-items: center; justify-content: center; width: 18px; height: 19px; border-left: 1px solid #d4d4d4; }
.markgrid { display: grid; grid-template-columns: repeat(3, 1fr); gap: 6px; margin-top: 6px; }
.markgrid button { display: flex; flex-direction: column; align-items: center; height: 42px; border: 1px solid #d0d0d0; padding-top: 6px; font-size: 12px; line-height: 20px; }
.markgrid svg { width: 16px; height: 16px; flex: none; }
.encodings { display: flex; flex-direction: column; gap: 3px; margin-top: 9px; padding: 0 4px 0 6px; }
.encodings div { display: flex; align-items: center; gap: 3px; }
.encodings svg { width: 16px; height: 16px; flex: none; }
.encodings .pill { flex: 1; width: auto; }

/* Shelves and sheet */
.canvas { flex: 1; min-width: 0; display: flex; flex-direction: column; gap: 6px; }
.shelf { display: flex; align-items: center; gap: 2px; flex: none; height: 28px; border: 1px solid #d4d4d4; background: #fafafa; }
.shelf-name { display: flex; align-items: center; gap: 6px; width: 125px; height: 26px; padding-left: 7px; border-right: 1px solid #d4d4d4; color: #444; }
.shelf-name svg { width: 12px; height: 12px; }
.sheet-row { flex: 1; min-height: 0; display: flex; gap: 6px; margin-bottom: 6px; }
.sheet { flex: 1; min-width: 0; display: flex; flex-direction: column; padding: 6px 6px 5px 5px; border: 1px solid #b3b3b3; background: #fff; }
.sheet-title {
  flex: none; height: 27px; padding: 1px 0 0 4px; color: #b327b0; font: italic bold 15px/27px "Comic Sans MS", "DejaVu Sans", sans-serif;
  background:
    repeating-linear-gradient(90deg, #000 0 6px, transparent 6px 9px) top / 100% 2px no-repeat,
    repeating-linear-gradient(90deg, #000 0 6px, transparent 6px 9px) bottom / 100% 2px no-repeat,
    repeating-linear-gradient(#000 0 6px, transparent 6px 9px) left / 2px 100% no-repeat,
    repeating-linear-gradient(#000 0 6px, transparent 6px 9px) right / 2px 100% no-repeat,
    #f4efef;
}
.viz { flex: 1; min-height: 0; display: grid; grid-template: auto minmax(0, 1fr) 16px / minmax(0, 1fr) 16px; }
.viz-head { border: 1px solid #e4e4e4; border-top: 0; text-align: center; height: 44px; font: 12px/21px "Open Sans", sans-serif; grid-row: 1; }
.field-label { padding-top: 2px; color: #222; }
.col-header { color: #777; padding-right: 118px; }
.map { position: relative; grid-row: 2; min-height: 0; overflow: hidden; border-right: 1px solid #ddd; border-bottom: 1px solid #ddd; margin-bottom: 1px; }
.mapsvg { display: block; width: 100%; height: 100%; }
.labels { font: 13px "Open Sans", sans-serif; fill: #1e1e1e; text-anchor: middle; }
.place { font: 15px "Open Sans", sans-serif; fill: #8f8f8f; text-anchor: middle; paint-order: stroke; stroke: #ededed; stroke-width: 2px; }
.place .in { fill: #5474a0; stroke: none; }
.maptools { position: absolute; left: 10px; top: 9px; width: 28px; display: flex; flex-direction: column; gap: 9px; }
.toolbox { display: flex; flex-direction: column; align-items: center; background: rgba(245, 245, 245, .92); border: 1px solid #bdbdbd; }
.toolbox button { width: 26px; height: 26px; display: flex; align-items: center; justify-content: center; color: #555; }
.toolbox svg { width: 14px; height: 14px; }
.toolbox .pinned { width: 22px; height: 22px; background: #e3e3e3; border: 1px solid #b5b5b5; }
.toolbox .pinned svg { width: 20px; height: 20px; }
.toolbox .more { height: 28px; margin-top: 6px; border-top: 1px solid #e0e0e0; }
.vscroll { display: flex; flex-direction: column; align-items: center; background: #f0f0f0; width: 16px; }
.viz > .vscroll { grid-column: 2; grid-row: 2; }
.hscroll { grid-column: 1; grid-row: 3; display: flex; align-items: center; background: #f0f0f0; }
.vscroll .thumb { width: 15px; background: #cdcdcd; height: 162px; margin-bottom: auto; }
.viz .vscroll .thumb { margin-top: 110px; }
.hscroll .thumb { height: 15px; width: 70.4%; background: #cdcdcd; margin: 0 auto 0 18.6%; }
.chev { flex: none; width: 16px; height: 17px; display: flex; align-items: center; justify-content: center; }
.chev::before { content: ""; width: 5px; height: 5px; border: solid #555; border-width: 2px 0 0 2px; transform: rotate(45deg); }
.chev.down::before { transform: rotate(225deg); }
.chev.left::before { transform: rotate(-45deg); }
.chev.right::before { transform: rotate(135deg); }

/* Legend */
.legend { flex: none; width: 174px; display: flex; flex-direction: column; border: 1px solid #cfcfcf; background: #fff; padding-right: 2px; }
.legend h3 { background: #fafafa; height: 29px; padding: 5px 0 0 6px; flex: none; font: 12px/20px "Open Sans", sans-serif; color: #444; }
.legend-body { flex: 1; min-height: 0; display: flex; justify-content: space-between; }
.legend ul { overflow: hidden; padding: 1px 0 0 4px; font: 12px/20px "Open Sans", sans-serif; color: #444; }
.legend li { display: flex; align-items: center; height: 20px; gap: 5px; }
.legend li i { width: 13px; height: 13px; border: 1px solid #666; }
.legend .vscroll .thumb { height: 335px; }
.c-blue { background: #7094bb; } .c-sky { background: #b2d4ed; } .c-orange { background: #f3a254; } .c-peach { background: #fdca94; }
.c-green { background: #72ac69; } .c-lime { background: #a1d993; } .c-olive { background: #c2a84e; } .c-yellow { background: #f2d680; }
.c-teal { background: #67a8a3; } .c-aqua { background: #9ec8c3; } .c-red { background: #e57475; } .c-salmon { background: #ffabac; }
.c-gray { background: #918886; } .c-silver { background: #c8bfbc; } .c-rose { background: #dc8aaa; } .c-pink { background: #fbcbdb; }
.c-purple { background: #bb91b3; } .c-lilac { background: #dab3d5; } .c-brown { background: #ae8e7e; } .c-tan { background: #e0c3b6; }

/* Sheet tabs and status bar */
footer { flex: none; }
.sheettabs { display: flex; height: 30px; border-top: 1px solid #c8c8c8; background: #e6e6e6; overflow: hidden; }
.st { flex: none; padding: 0 6px; border-right: 1px solid #c8c8c8; color: #666; text-align: left; white-space: nowrap; overflow: hidden; }
.st.active { background: #fafafa; color: #444; font-weight: bold; padding: 0 5px; }
.source-tab { width: 131px; display: flex; align-items: center; gap: 5px; padding-left: 9px; }
.source-tab svg { width: 10px; height: 12px; }
.st.long { width: 201px; }
.st.last { flex: 1 1 0; min-width: 0; }
.add { width: 32px; display: flex; align-items: center; justify-content: center; }
.add svg { width: 16px; height: 16px; }
.status { display: flex; align-items: center; height: 19px; border-top: 1px solid #d4d4d4; background: #e9e9e9; color: #333; font: 11px/18px "Open Sans", sans-serif; padding-left: 3px; }
.status span { margin-right: 15px; }
.cells { margin-left: auto; display: flex; }
.cells i { width: 48px; height: 18px; border-left: 1px solid #cfcfcf; }
.cells i:first-child { width: 87px; }
.nav { display: flex; width: 71px; justify-content: space-around; height: 18px; border-right: 1px solid #cfcfcf; border-left: 1px solid #cfcfcf; }
.nav svg { width: 8px; height: 8px; }
.views { display: flex; gap: 9px; padding: 0 6px 0 6px; }
.views svg { width: 12px; height: 12px; display: block; }
```
